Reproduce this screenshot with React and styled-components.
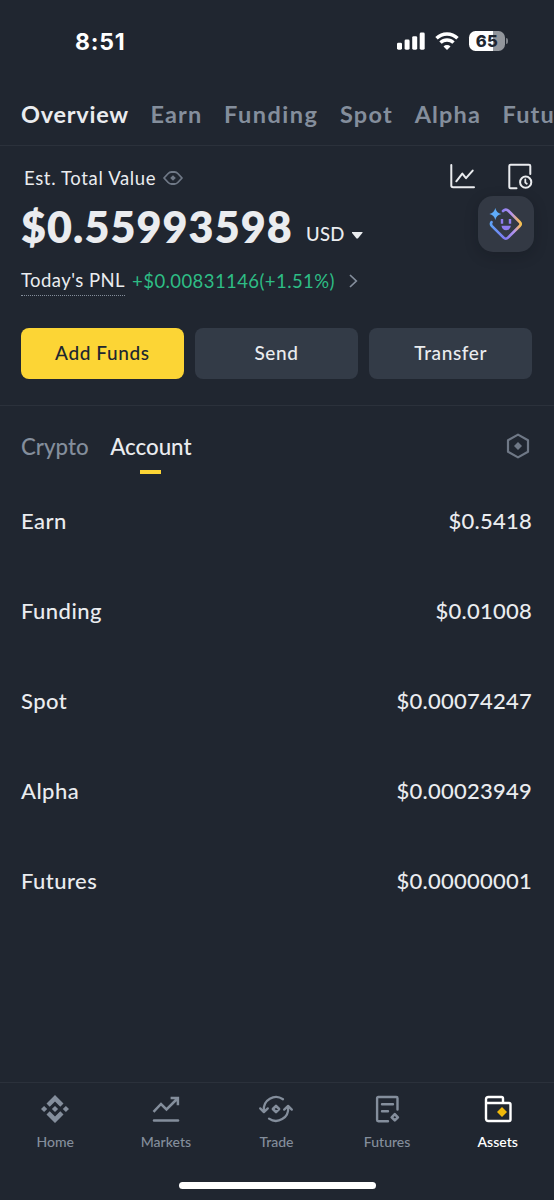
import React, { useState } from 'react';
import styled, { createGlobalStyle } from 'styled-components';


const GlobalStyle = createGlobalStyle`
    * {
        box-sizing: border-box;
    }

    body {
        margin: 0;
        background: #202630;
        color: #eaecef;
        font-family: Lato, "Liberation Sans", sans-serif;
        overflow: hidden;
    }

    button {
        padding: 0;
        border: 0;
        background: none;
        color: inherit;
        font: inherit;
        letter-spacing: inherit;
    }

    svg {
        display: block;
        flex: none;
        overflow: visible;
    }
`;

const Screen = styled.div`
    width: 554px;
    height: 1200px;
    display: flex;
    flex-direction: column;
    overflow: hidden;
    white-space: nowrap;
`;

const StatusBar = styled.header`
    height: 83px;
    padding: 0 46px 0 75px;
    display: flex;
    justify-content: space-between;
    align-items: center;
    color: #fff;
    font-family: Inter, sans-serif;

    .time {
        font-size: 23px;
        font-weight: 700;
        letter-spacing: 0.8px;
    }

    .signals {
        display: flex;
        align-items: center;
        gap: 10px;
        padding-bottom: 1px;
    }
`;

const BatteryTag = styled.div`
    display: flex;
    align-items: center;
    gap: 1px;

    .cell {
        width: 36px;
        height: 20px;
        border-radius: 6.5px;
        background: linear-gradient(90deg, #fff 66%, #92969c 66%);
        color: #202630;
        font-size: 16.5px;
        font-weight: 800;
        line-height: 20px;
        text-align: center;
        letter-spacing: 0.4px;
    }

    .tip {
        width: 2px;
        height: 6px;
        border-radius: 0 2px 2px 0;
        background: #7b8087;
    }
`;

const TopTabs = styled.nav`
    height: 63px;
    padding: 17px 0 0 21px;
    display: flex;
    border-bottom: 1px solid #2b313b;
`;

const TopTab = styled.button`
    height: 28px;
    margin-right: 21.5px;
    flex: none;
    color: ${props => (props.$active ? '#eaecef' : '#848e9c')};
    font-size: 23.5px;
    font-weight: 700;
    line-height: 28px;
    letter-spacing: ${props => props.$track}px;
`;

const Summary = styled.section`
    height: 260px;
    padding: 18px 22px 0 21px;
    border-bottom: 1px solid #2b313b;
`;

const SummaryTop = styled.div`
    height: 26px;
    padding-left: 3px;
    display: flex;
    align-items: center;
    justify-content: space-between;
    font-size: 18.5px;
    letter-spacing: 0.65px;

    .label {
        display: flex;
        align-items: center;
        gap: 7px;
        padding-top: 1px;
    }

    .actions {
        display: flex;
        gap: 33px;
        margin-right: -1px;
        padding-bottom: 2px;
    }
`;

const BalanceRow = styled.div`
    height: 72px;
    display: flex;
    justify-content: space-between;

    .value {
        display: flex;
        align-items: baseline;
        padding-top: 10px;
        line-height: 54px;
    }

    .amount {
        width: 273px;
        font-size: 43px;
        font-weight: 800;
        letter-spacing: 1.1px;
    }

    .currency {
        position: relative;
        top: -2.5px;
        margin: 0 7px 0 12px;
        font-size: 18.5px;
        font-weight: 500;
        letter-spacing: 0.3px;
    }
`;

const Caret = styled.span`
    width: 11px;
    height: 7px;
    align-self: center;
    margin-top: 8px;
    clip-path: polygon(8% 0, 92% 0, 100% 14%, 56% 100%, 44% 100%, 0 14%);
    background: #eaecef;
`;

const AssistantButton = styled.button`
    width: 56px;
    height: 56px;
    margin: 6px -1.5px 0 0;
    display: flex;
    align-items: center;
    justify-content: center;
    border-radius: 15px;
    background: #333944;
    box-shadow: 0 4px 14px rgba(10, 14, 20, 0.22);
`;

const PnlRow = styled.div`
    height: 34px;
    padding-top: 5px;
    display: flex;
    align-items: flex-start;
    font-size: 18.5px;
    line-height: 28px;

    .name {
        height: 29px;
        margin-right: 7px;
        border-bottom: 1px dotted #848e9c;
        line-height: 27px;
        letter-spacing: 0.45px;
    }

    .change {
        margin-right: 14px;
        color: #2ebd85;
        letter-spacing: 0.42px;
    }

    svg {
        margin-top: 7px;
    }
`;

const Actions = styled.div`
    margin-top: 32px;
    display: grid;
    grid-template-columns: repeat(3, 1fr);
    gap: 11.5px;
`;

const ActionButton = styled.button`
    height: 51px;
    padding-bottom: 2px;
    border-radius: 8px;
    background: ${props => (props.$primary ? '#fcd535' : '#333b47')};
    color: ${props => (props.$primary ? '#202630' : '#eaecef')};
    font-size: 19px;
    font-weight: 500;
    letter-spacing: 0.6px;
`;

const AccountTabs = styled.nav`
    height: 70px;
    padding: 25px 24px 0 21px;
    display: flex;
    align-items: flex-start;

    svg {
        margin: 2px 0 0 auto;
    }
`;

const AccountTab = styled.button`
    height: 43px;
    margin-right: 21.5px;
    display: flex;
    flex-direction: column;
    align-items: center;
    justify-content: space-between;
    color: ${props => (props.$active ? '#eaecef' : '#848e9c')};
    font-size: 22.3px;
    font-weight: 500;
    line-height: 31px;

    &::after {
        content: '';
        width: 21px;
        height: 4px;
        background: ${props => (props.$active ? '#fcd535' : 'transparent')};
    }
`;

const AccountList = styled.ul`
    flex: 1;
    margin: 0;
    padding: 0 22px 0 21px;
    list-style: none;
`;

const AccountRow = styled.li`
    height: 90px;
    padding-bottom: 1px;
    display: flex;
    justify-content: space-between;
    align-items: center;
    font-size: 22px;
    font-weight: 500;
    letter-spacing: 0.45px;

    .value {
        letter-spacing: 0.25px;
    }
`;

const BottomNav = styled.nav`
    height: 100px;
    padding: 12px 1px 0 0;
    display: grid;
    grid-template-columns: repeat(5, 1fr);
    border-top: 1px solid #2b313b;
`;

const NavItem = styled.button`
    height: 56px;
    display: flex;
    flex-direction: column;
    align-items: center;
    justify-content: space-between;
    color: ${props => (props.$active ? '#fff' : '#848e9c')};
    font-size: 14px;
    font-weight: ${props => (props.$active ? 600 : 500)};
    line-height: 18px;
`;

const HomeIndicator = styled.div`
    width: 197px;
    height: 7px;
    margin: 0 auto 11px;
    border-radius: 4px;
    background: #fff;
`;


const SignalIcon = () => (
  <svg width="28" height="18" viewBox="0 0 28 18" fill="#fff">
    <rect x="0" y="10.7" width="5" height="7" rx="1.4" />
    <rect x="7.6" y="7.6" width="5" height="10.1" rx="1.4" />
    <rect x="15.2" y="4.2" width="5" height="13.5" rx="1.4" />
    <rect x="22.7" y="0.6" width="5" height="17.1" rx="1.4" />
  </svg>
);

const WifiIcon = () => (
  <svg width="24" height="18" viewBox="0 0 24 18" fill="none" stroke="#fff" strokeWidth="3.4">
    <path d="M1.5 6.300a15 15 0 0 1 21 0" />
    <path d="M5.500 10.600a9.300 9.300 0 0 1 13 0" />
    <path d="M12 18 8.500 14.400a4.900 4.900 0 0 1 7 0Z" fill="#fff" stroke="none" />
  </svg>
);

const EyeIcon = () => (
  <svg width="20" height="14" viewBox="0 0 20 14" fill="none" stroke="#6f7886" strokeWidth="1.8" strokeLinejoin="round">
    <path d="M1 7 5.2 2.5Q6.6 1 8.5 1h3q1.900 0 3.300 1.500L19 7l-4.200 4.500Q13.400 13 11.500 13h-3q-1.900 0-3.300-1.500Z" />
    <path d="m10 4.200 2.800 2.800-2.800 2.800L7.200 7Z" fill="#6f7886" stroke="none" />
  </svg>
);

const ChartIcon = () => (
  <svg width="25" height="25" viewBox="0 0 25 25" fill="none" stroke="#eaecef" strokeWidth="2" strokeLinecap="round" strokeLinejoin="round">
    <path d="M1.300 1v20.500q0 1.800 1.800 1.800H24" />
    <path d="m6.300 17.300 6-7.700 3.700 4.600L22.700 6.600" />
  </svg>
);

const HistoryIcon = () => (
  <svg width="25" height="25" viewBox="0 0 25 25" fill="none" stroke="#eaecef" strokeWidth="2" strokeLinecap="round" strokeLinejoin="round">
    <path d="M8.500 24.300H2.600q-1.300 0-1.300-1.300V2q0-1.300 1.300-1.300H21q1.300 0 1.300 1.300v8" />
    <circle cx="17.700" cy="18.200" r="5.600" />
    <path d="M17.300 15.500v3l1.500 1.200" strokeWidth="1.800" />
  </svg>
);

const AssistantIcon = () => (
  <svg width="34" height="34" viewBox="0 0 34 34" fill="none">
    <defs>
      <linearGradient id="face" gradientUnits="userSpaceOnUse" x1="1" y1="20" x2="33" y2="15">
        <stop offset="0" stopColor="#5aa7f8" />
        <stop offset="0.4" stopColor="#7f78f2" />
        <stop offset="0.72" stopColor="#b594ee" />
        <stop offset="0.9" stopColor="#f0b56a" />
        <stop offset="1" stopColor="#fcc944" />
      </linearGradient>
    </defs>
    <path
      d="M14 4q2.800-2.800 5.600 0L30.700 15q2 2 0 4L19 30.700q-2.200 2.200-4.400 0L3 19.200q-1.800-2-.5-4"
      stroke="url(#face)"
      strokeWidth="2.600"
      strokeLinecap="round"
    />
    <path d="M6.300 1q1 4.900 6 6-5 1.100-6 6-1-4.900-6-6 5-1.100 6-6Z" fill="#5fadfb" />
    <path d="M13 12v4.700M21 12v4.700" stroke="#8f7bf0" strokeWidth="2.400" />
    <path d="M12.500 18.800h9.400q-.6 4.400-4.700 4.400t-4.700-4.400Z" fill="#8f7bf0" />
  </svg>
);

const ChevronIcon = () => (
  <svg width="9" height="14" viewBox="0 0 9 14" fill="none" stroke="#848e9c" strokeWidth="1.700">
    <path d="m1 1 6.300 6L1 13" />
  </svg>
);

const HexIcon = () => (
  <svg width="24" height="26" viewBox="0 0 24 26" fill="none" stroke="#6f7886" strokeWidth="2.200" strokeLinejoin="round">
    <path d="m12 1.600 10 5.700v11.400l-10 5.700-10-5.700V7.300Z" />
    <path d="m12 9 4 4-4 4-4-4Z" fill="#6f7886" stroke="none" />
  </svg>
);

const HomeIcon = () => (
  <svg width="28" height="28" viewBox="0 0 28 28" fill="currentColor">
    <path d="m14 0 8.500 8.500-3.200 3.200L14 6.400l-5.300 5.300-3.200-3.200Z" />
    <path d="m14 28 8.500-8.500-3.200-3.200-5.300 5.300-5.300-5.300-3.200 3.200Z" />
    <path d="m3.100 10.900 3.100 3.100-3.100 3.100L0 14ZM24.900 10.900 28 14l-3.100 3.100-3.100-3.100ZM14 10.900l3.100 3.100-3.100 3.100-3.100-3.100Z" />
  </svg>
);

const MarketsIcon = () => (
  <svg width="28" height="28" viewBox="0 0 28 28" fill="none" stroke="currentColor" strokeWidth="2.500">
    <path d="M1.500 16.800 9 9l5.500 5.500L25.500 3.500M18.600 2.900h7.300v7.300" />
    <path d="M2 25.400h24" strokeLinecap="round" />
  </svg>
);

const TradeIcon = () => (
  <svg width="34" height="28" viewBox="0 0 34 28" fill="none" stroke="currentColor" strokeWidth="2.300" strokeLinecap="round" strokeLinejoin="round">
    <path d="M24 4.200A12.200 12.200 0 0 0 4.900 15.500M1.200 13.400l3.700 3.700 3.900-3.700" />
    <path d="M10 23.600A12.200 12.200 0 0 0 29.100 12.300M25.200 14.600l3.900-3.700 3.700 3.700" />
    <path d="m17 10.900 3.100 3.100-3.100 3.100-3.100-3.100Z" strokeWidth="2.600" />
  </svg>
);

const FuturesIcon = () => (
  <svg width="28" height="28" viewBox="0 0 28 28" fill="none" stroke="currentColor" strokeWidth="2.400" strokeLinecap="round" strokeLinejoin="round">
    <path d="M15 26.200H5.300q-1.200 0-1.200-1.200V3.200Q4.100 2 5.300 2h18q1.200 0 1.200 1.200v11.300M9 9.300h11M9 16.200h6" />
    <path d="m21.800 19.200 3.100 3.100-3.100 3.100-3.100-3.100Z" strokeWidth="2.600" />
  </svg>
);

const AssetsIcon = () => (
  <svg width="28" height="28" viewBox="0 0 28 28" fill="none" stroke="currentColor" strokeWidth="2.400" strokeLinecap="round" strokeLinejoin="round">
    <path d="M2 8V4.500Q2 2 4.500 2h13q1.500 0 1.500 1.500V8M2 8h23q1.500 0 1.500 1.500v15q0 1.500-1.500 1.500H4.500Q2 26 2 23.500Z" />
    <path d="m18 12 5 5-5 5-5-5Z" fill="#f0b90b" stroke="none" />
  </svg>
);

const Battery = ({ level }) => (
  <BatteryTag>
    <div className="cell">{level}</div>
    <div className="tip" />
  </BatteryTag>
);


const topTabs = [
  { name: 'Overview', track: 0.75 },
  { name: 'Earn', track: 1.15 },
  { name: 'Funding', track: 1.5 },
  { name: 'Spot', track: 1.3 },
  { name: 'Alpha', track: 1.15 },
  { name: 'Futures', track: 1.15 },
];

const accounts = [
  { name: 'Earn', value: '$0.5418' },
  { name: 'Funding', value: '$0.01008' },
  { name: 'Spot', value: '$0.00074247' },
  { name: 'Alpha', value: '$0.00023949' },
  { name: 'Futures', value: '$0.00000001' },
];

const navItems = [
  { name: 'Home', Icon: HomeIcon },
  { name: 'Markets', Icon: MarketsIcon },
  { name: 'Trade', Icon: TradeIcon },
  { name: 'Futures', Icon: FuturesIcon },
  { name: 'Assets', Icon: AssetsIcon },
];


function App() {
  const [topTab, setTopTab] = useState('Overview');
  const [accountTab, setAccountTab] = useState('Account');
  const [page, setPage] = useState('Assets');

  return (
    <Screen>
      <GlobalStyle />
      <StatusBar>
        <div className="time">8:51</div>
        <div className="signals">
          <SignalIcon />
          <WifiIcon />
          <Battery level={65} />
        </div>
      </StatusBar>

      <TopTabs>
        {topTabs.map(({ name, track }) => (
          <TopTab key={name} type="button" $active={name === topTab} $track={track} onClick={() => setTopTab(name)}>
            {name}
          </TopTab>
        ))}
      </TopTabs>

      <Summary>
        <SummaryTop>
          <div className="label">
            <span>Est. Total Value</span>
            <EyeIcon />
          </div>
          <div className="actions">
            <ChartIcon />
            <HistoryIcon />
          </div>
        </SummaryTop>
        <BalanceRow>
          <div className="value">
            <span className="amount">$0.55993598</span>
            <span className="currency">USD</span>
            <Caret />
          </div>
          <AssistantButton type="button">
            <AssistantIcon />
          </AssistantButton>
        </BalanceRow>
        <PnlRow>
          <span className="name">Today&apos;s PNL</span>
          <span className="change">+$0.00831146(+1.51%)</span>
          <ChevronIcon />
        </PnlRow>
        <Actions>
          <ActionButton type="button" $primary>Add Funds</ActionButton>
          <ActionButton type="button">Send</ActionButton>
          <ActionButton type="button">Transfer</ActionButton>
        </Actions>
      </Summary>

      <AccountTabs>
        {['Crypto', 'Account'].map(name => (
          <AccountTab key={name} type="button" $active={name === accountTab} onClick={() => setAccountTab(name)}>
            {name}
          </AccountTab>
        ))}
        <HexIcon />
      </AccountTabs>

      <AccountList>
        {accounts.map(({ name, value }) => (
          <AccountRow key={name}>
            <span>{name}</span>
            <span className="value">{value}</span>
          </AccountRow>
        ))}
      </AccountList>

      <BottomNav>
        {navItems.map(({ name, Icon }) => (
          <NavItem key={name} type="button" $active={name === page} onClick={() => setPage(name)}>
            <Icon />
            {name}
          </NavItem>
        ))}
      </BottomNav>
      <HomeIndicator />
    </Screen>
  );
}

export default App;
